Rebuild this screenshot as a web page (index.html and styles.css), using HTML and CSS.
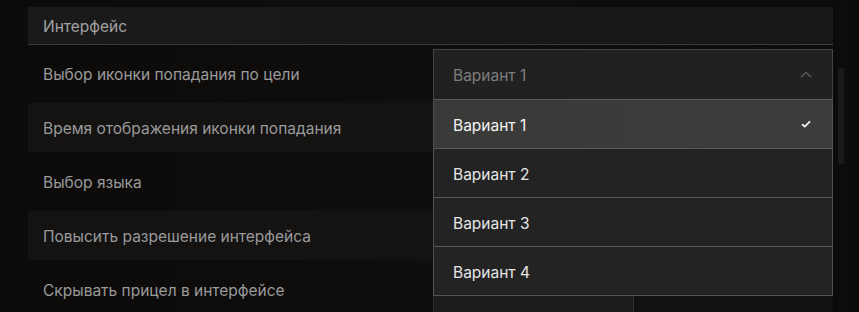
FILE: index.html
```html
<!DOCTYPE html>
<html lang="ru">
<head>
<meta charset="utf-8">
<title>Интерфейс</title>
<link rel="stylesheet" href="styles.css">
</head>
<body>
<div class="page">
  <section class="panel">
    <div class="header">Интерфейс</div>
    <div class="rows">
      <div class="row">
        <div class="label">Выбор иконки попадания по цели</div>
        <div class="control">
          <div class="select">
            <div class="select-box">
              <span class="select-value">Вариант 1</span>
              <svg class="chevron" width="12" height="7" viewBox="0 0 12 7"><path d="M1 6 L6 1.5 L11 6" fill="none" stroke="#575757" stroke-width="1.6"/></svg>
            </div>
            <ul class="options">
              <li class="option selected"><span>Вариант 1</span>
                <svg class="check" width="10" height="8" viewBox="0 0 10 8"><path d="M1 4.2 L3.8 6.6 L9 1.4" fill="none" stroke="#f2f2f2" stroke-width="1.8"/></svg>
              </li>
              <li class="option"><span>Вариант 2</span></li>
              <li class="option"><span>Вариант 3</span></li>
              <li class="option"><span>Вариант 4</span></li>
            </ul>
          </div>
        </div>
      </div>
      <div class="row alt">
        <div class="label">Время отображения иконки попадания</div>
        <div class="control"></div>
      </div>
      <div class="row">
        <div class="label">Выбор языка</div>
        <div class="control"></div>
      </div>
      <div class="row alt">
        <div class="label">Повысить разрешение интерфейса</div>
        <div class="control"></div>
      </div>
      <div class="row">
        <div class="label">Скрывать прицел в интерфейсе</div>
        <div class="control">
          <div class="toggle">
            <div class="seg active">Выкл</div>
            <div class="seg">Вкл</div>
          </div>
        </div>
      </div>
    </div>
  </section>
  <div class="scroll">
    <div class="thumb"></div>
  </div>
</div>
</body>
</html>
```
FILE: styles.css
```css
* { box-sizing: border-box; }
html, body { margin: 0; padding: 0; }
body {
  width: 859px;
  height: 312px;
  overflow: hidden;
  background: #0e0c0b;
  font-family: Inter, "Noto Sans", sans-serif;
  font-size: 15.5px;
  color: #9c9c9c;
}
.page {
  display: flex;
  padding-left: 28px;
  padding-top: 7px;
  height: 312px;
  background: linear-gradient(90deg, #0d0b0a 0%, #100e0d 50%, #0c0b0a 100%);
}
.panel {
  width: 805px;
  flex: none;
}
.header {
  height: 38px;
  display: flex;
  align-items: center;
  padding-left: 15px;
  padding-top: 1px;
  background: linear-gradient(90deg, #1b1a1a, #191818 60%, #181717);
  border-bottom: 1px solid #3c3b3b;
  color: #a2a2a2;
}
.rows {
  display: flex;
  flex-direction: column;
  gap: 5px;
  margin-top: 4px;
}
.row {
  height: 49px;
  display: grid;
  grid-template-columns: 405px 400px;
  align-items: center;
}
.row.alt { background: #141312; }
.label {
  padding-left: 15px;
  padding-top: 2px;
  color: #9a9a9a;
}
.control {
  position: relative;
  height: 49px;
}
.select {
  position: relative;
  z-index: 5;
}
.select-box {
  height: 50px;
  border: 1px solid #444;
  border-bottom: none;
  background: #222121;
  display: flex;
  align-items: center;
  justify-content: space-between;
  padding: 2px 20px 0 19px;
  color: #7d7d7d;
}
.chevron { margin-top: -2px; }
.options {
  position: absolute;
  left: 0;
  top: 50px;
  width: 400px;
  margin: 0;
  padding: 0;
  list-style: none;
  border-left: 1px solid #4f4f4f;
  border-right: 1px solid #4f4f4f;
  border-bottom: 1px solid #555;
  background: #232323;
}
.option {
  height: 49px;
  border-top: 1px solid #575757;
  display: flex;
  align-items: center;
  justify-content: space-between;
  padding: 2px 21px 0 19px;
  color: #e6e6e6;
}
.option.selected {
  background: linear-gradient(90deg, #3a3a39, #3c3c3b);
  color: #f4f4f4;
}
.check { margin-top: -2px; }
.toggle {
  display: flex;
  height: 49px;
  margin-top: 1px;
}
.seg {
  flex: 1;
  display: flex;
  align-items: center;
  justify-content: center;
  padding-bottom: 2px;
  color: #3e3e3e;
  background: #111;
}
.seg.active {
  background: #1c1c1c;
  border: 1px solid #2c2c2c;
}
.scroll {
  width: 26px;
  flex: none;
  padding-left: 5px;
  padding-top: 68px;
  background: linear-gradient(90deg, #0b0a09, #0f0d0c 50%, #0a0908);
  margin-top: -7px;
}
.thumb {
  width: 6px;
  height: 96px;
  background: #1b1a19;
}
```
